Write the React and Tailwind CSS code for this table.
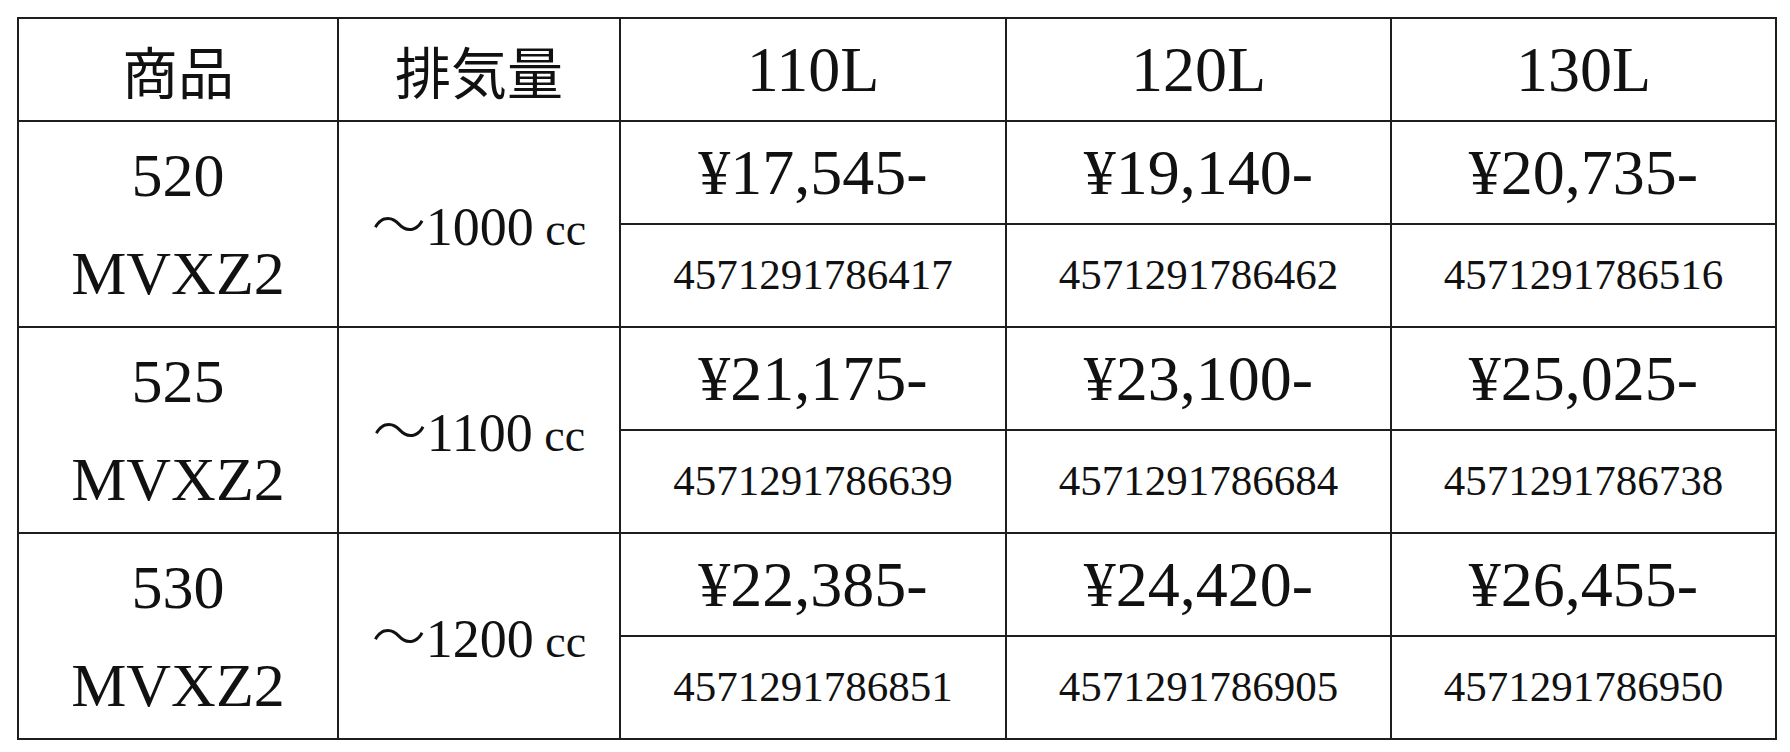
import React from 'react';

const rows = [
  {
    name: '520',
    cc: '1000',
    prices: ['¥17,545-', '¥19,140-', '¥20,735-'],
    jans: ['4571291786417', '4571291786462', '4571291786516'],
  },
  {
    name: '525',
    cc: '1100',
    prices: ['¥21,175-', '¥23,100-', '¥25,025-'],
    jans: ['4571291786639', '4571291786684', '4571291786738'],
  },
  {
    name: '530',
    cc: '1200',
    prices: ['¥22,385-', '¥24,420-', '¥26,455-'],
    jans: ['4571291786851', '4571291786905', '4571291786950'],
  },
];

const cell = 'border-2 border-[#1e1e1e] text-center align-middle p-0';

export default function App() {
  return (
    <div className="w-[1790px] h-[752px] bg-white pt-[17px] pl-[17px] text-[#111] font-['Liberation_Serif','Noto_Sans_CJK_JP',serif]">
      <table className="table-fixed border-collapse w-[1758px]">
        <colgroup>
          <col className="w-[320px]" />
          <col className="w-[282px]" />
          <col className="w-[386px]" />
          <col className="w-[385px]" />
          <col className="w-[385px]" />
        </colgroup>
        <thead>
          <tr className="h-[103px]">
            <th className={`${cell} font-normal text-[56px] font-['Noto_Sans_CJK_JP',serif]`}>商品</th>
            <th className={`${cell} font-normal text-[56px] font-['Noto_Sans_CJK_JP',serif]`}>排気量</th>
            <th className={`${cell} font-normal text-[64px]`}>110L</th>
            <th className={`${cell} font-normal text-[64px]`}>120L</th>
            <th className={`${cell} font-normal text-[64px]`}>130L</th>
          </tr>
        </thead>
        <tbody>
          {rows.map((r) => (
            <React.Fragment key={r.name}>
              <tr className="h-[103px]">
                <td rowSpan={2} className={`${cell} text-[62px] leading-[98px]`}>
                  <div>{r.name}</div>
                  <div>MVXZ2</div>
                </td>
                <td rowSpan={2} className={`${cell} text-[54px]`}>
                  <span className="font-['Noto_Sans_CJK_JP',serif] font-light">～</span>
                  {r.cc}
                  <span className="text-[46px]"> cc</span>
                </td>
                {r.prices.map((p) => (
                  <td key={p} className={`${cell} text-[64px]`}>{p}</td>
                ))}
              </tr>
              <tr className="h-[103px]">
                {r.jans.map((j) => (
                  <td key={j} className={`${cell} text-[43px]`}>{j}</td>
                ))}
              </tr>
            </React.Fragment>
          ))}
        </tbody>
      </table>
    </div>
  );
}
